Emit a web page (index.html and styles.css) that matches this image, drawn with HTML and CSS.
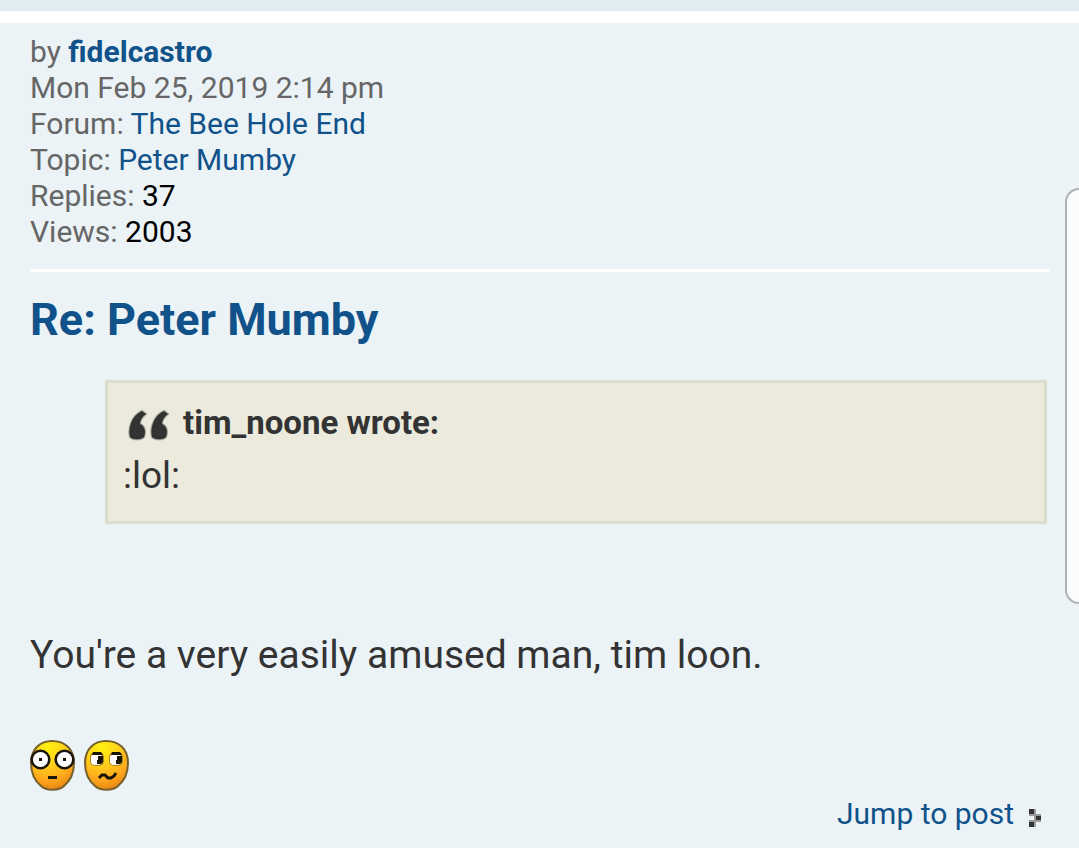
FILE: index.html
```
<!DOCTYPE html>
<html lang="en">
<head>
    <meta charset="UTF-8">
    <meta name="viewport" content="width=device-width, initial-scale=1.0">
    <title>Re: Peter Mumby</title>
    <link rel="stylesheet" href="styles.css">
</head>
<body>
    <div class="previous-post"></div>

    <main class="post">
        <ul class="post-details">
            <li>by <a href="#" class="username">fidelcastro</a></li>
            <li>Mon Feb 25, 2019 2:14 pm</li>
            <li>Forum: <a href="#">The Bee Hole End</a></li>
            <li>Topic: <a href="#">Peter Mumby</a></li>
            <li>Replies: <strong>37</strong></li>
            <li>Views: <strong>2003</strong></li>
        </ul>

        <h1><a href="#">Re: Peter Mumby</a></h1>

        <blockquote>
            <cite>
                <svg class="quote-icon" viewBox="0 0 42 32" aria-hidden="true">
                    <path d="M14 2 L18 5 C14 8 12 11 12 15 C17 17 18 23 16 28 C13 31 5 31 2 28 C0 20 3 7 14 2 Z"/>
                    <path d="M36 2 L40 5 C36 8 34 11 34 15 C39 17 40 23 38 28 C35 31 27 31 24 28 C22 20 25 7 36 2 Z"/>
                </svg>
                tim_noone wrote:
            </cite>
            <p>:lol:</p>
        </blockquote>

        <p class="message">You're a very easily amused man, tim loon.</p>

        <div class="smilies">
            <svg viewBox="0 0 45 51" role="img" aria-label="Shocked">
                <defs>
                    <radialGradient id="skin" cx="0.4" cy="0.1" r="0.95">
                        <stop offset="0" stop-color="#fff010"/>
                        <stop offset="0.4" stop-color="#ffd21c"/>
                        <stop offset="0.75" stop-color="#ffa51c"/>
                        <stop offset="1" stop-color="#e08010"/>
                    </radialGradient>
                </defs>
                <path class="face" d="M22 1 C35 1 44 9 44 23 C44 33 40 41 34 46 C29 51 16 51 11 46 C5 41 1 33 1 23 C1 9 10 1 22 1 Z"/>
                <circle class="ink" cx="10.5" cy="19.5" r="10"/>
                <circle class="ink" cx="34.5" cy="19.5" r="10"/>
                <circle class="white" cx="10.5" cy="19.5" r="7.5"/>
                <circle class="white" cx="34.5" cy="19.5" r="7.5"/>
                <path class="ink" d="M9 18 H12 V21 H9 Z M33 18 H36 V21 H33 Z M18 36 H27 V39 H18 Z"/>
            </svg>
            <svg viewBox="0 0 45 51" role="img" aria-label="Confused">
                <path class="face" d="M22 1 C35 1 44 9 44 23 C44 33 40 41 34 46 C29 51 16 51 11 46 C5 41 1 33 1 23 C1 9 10 1 22 1 Z"/>
                <rect class="lid" x="6" y="12" width="14" height="14" rx="5"/>
                <rect class="lid" x="25" y="12" width="14" height="14" rx="5"/>
                <rect class="white" x="7" y="14" width="11" height="11" rx="4"/>
                <rect class="white" x="26" y="14" width="11" height="11" rx="4"/>
                <path class="ink" d="M9 12 H17 L19 15 H8 Z M28 12 H36 L38 15 H27 Z"/>
                <path class="ink" d="M14 16 H19 V22 L17 24 H13 V20 H14 Z M33 16 H38 V22 L36 24 H32 V20 H33 Z"/>
                <path class="mouth" d="M15 38 L18 35 H21 L24 38 H27 L30 36 L32 33"/>
            </svg>
        </div>

        <div class="jump">
            <a href="#">Jump to post
                <svg class="jump-icon" viewBox="0 0 12 18" aria-hidden="true">
                    <path class="shade" d="M0 0 H7 V5 H12 V13 H7 V18 H0 V11 H5 V7 H0 Z"/>
                    <path class="dark" d="M0 0 H5 V5 H0 Z M7 7 H12 V11 H7 Z M0 13 H5 V18 H0 Z"/>
                </svg>
            </a>
        </div>
    </main>

    <div class="side-tab"></div>
</body>
</html>
```

FILE: styles.css
```
* {
    box-sizing: border-box;
}

body {
    margin: 0;
    background: #fff;
    color: #333;
    font-family: Roboto, "Liberation Sans", sans-serif;
    overflow-x: hidden;
}

a {
    color: #105289;
    text-decoration: none;
}

.previous-post {
    height: 11px;
    margin-bottom: 12px;
    background: #e1ebf2;
}

.post {
    padding: 11px 29px 16px 30px;
    background: #ebf3f7;
}

.post-details {
    list-style: none;
    margin: 0 0 26px;
    padding: 0 0 19px;
    border-bottom: 3px solid #fff;
    color: #666;
    font-size: 30px;
    line-height: 36px;
}

.post-details strong {
    color: #000;
    font-weight: normal;
}

.post-details .username {
    font-weight: bold;
}

h1 {
    margin: 0 0 38px;
    font-size: 45px;
    line-height: 44px;
}

blockquote {
    margin: 0 3px 104px 75px;
    padding: 20px 15px;
    background: #ebeadd;
    border: 3px solid #dbdbce;
}

cite {
    display: flex;
    align-items: center;
    gap: 13px;
    font-size: 33px;
    font-style: normal;
    font-weight: bold;
    line-height: 40px;
}

.quote-icon {
    width: 42px;
    height: 32px;
    margin: 4px 0 0 5px;
    fill: #333;
    stroke: rgba(51, 51, 51, 0.4);
    stroke-width: 2px;
}

blockquote p {
    margin: 8px 0 0;
    font-size: 37px;
    line-height: 50px;
}

.message {
    margin: 0 0 58px;
    font-size: 39px;
    line-height: 54px;
}

.smilies {
    display: flex;
    gap: 9px;
}

.smilies svg {
    width: 45px;
    height: 51px;
}

.face {
    fill: url(#skin);
    stroke: #75602c;
    stroke-width: 2px;
}

.ink {
    fill: #1a1508;
}

.white {
    fill: #fff;
}

.lid {
    fill: #a8861c;
}

.mouth {
    fill: none;
    stroke: #1a1508;
    stroke-width: 3px;
}

.jump {
    margin-top: 5px;
    font-size: 30px;
    line-height: 36px;
}

.jump a {
    display: flex;
    justify-content: flex-end;
    align-items: center;
    gap: 15px;
    padding-right: 9px;
}

.jump-icon {
    width: 12px;
    height: 18px;
    margin-top: 8px;
}

.shade {
    fill: #999;
}

.dark {
    fill: #333;
}

.side-tab {
    position: absolute;
    top: 188px;
    right: 0;
    width: 14px;
    height: 416px;
    background: #fbfcfd;
    border: 2px solid #adb1b3;
    border-right: 0;
    border-radius: 18px 0 0 18px;
}
```
